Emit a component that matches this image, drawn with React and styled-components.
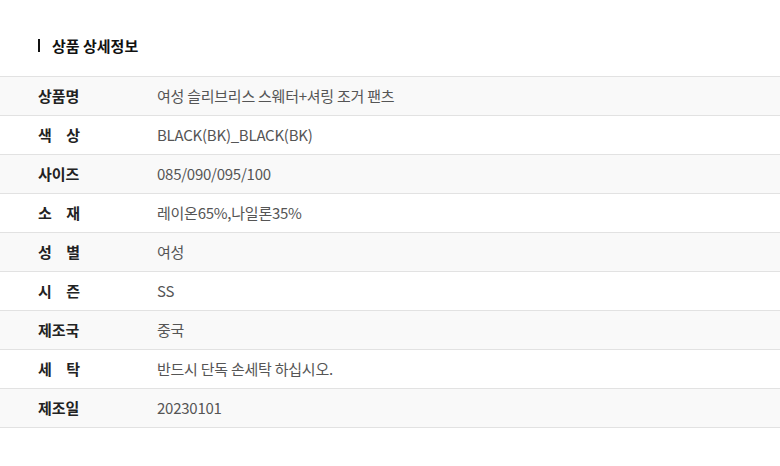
import React from 'react';
import styled, { createGlobalStyle } from 'styled-components';

const GlobalStyle = createGlobalStyle`
	body {
		margin: 0;
		background: #fff;
		font-family: 'Noto Sans CJK KR', 'Noto Sans', sans-serif;
	}
`;

const rows = [
	{ label: '상품명', value: '여성 슬리브리스 스웨터+셔링 조거 팬츠' },
	{ label: '색 상', value: 'BLACK(BK)_BLACK(BK)' },
	{ label: '사이즈', value: '085/090/095/100' },
	{ label: '소 재', value: '레이온65%,나일론35%' },
	{ label: '성 별', value: '여성' },
	{ label: '시 즌', value: 'SS' },
	{ label: '제조국', value: '중국' },
	{ label: '세 탁', value: '반드시 단독 손세탁 하십시오.' },
	{ label: '제조일', value: '20230101' }
];

const App = () => {
	return (
		<Wrap>
			<GlobalStyle />
			<Title>상품 상세정보</Title>
			<Table>
				{rows.map((row, i) => (
					<Row key={row.label} $shaded={i % 2 === 0}>
						<Label>{row.label}</Label>
						<Value>{row.value}</Value>
					</Row>
				))}
			</Table>
		</Wrap>
	);
};

export default App;

const Wrap = styled.div`
	width: 780px;
	height: 466px;
	padding-top: 33px;
	box-sizing: border-box;
`;

const Title = styled.h2`
	margin: 0 0 0 38px;
	display: flex;
	align-items: center;
	height: 26px;
	padding-bottom: 1px;
	box-sizing: border-box;
	font-size: 15px;
	font-weight: 700;
	color: #111;
	&::before {
		content: '';
		width: 2px;
		height: 13px;
		background: #111;
		margin-right: 12px;
	}
`;

const Table = styled.div`
	margin-top: 17px;
	border-top: 1px solid #e2e2e2;
`;

const Row = styled.div`
	display: flex;
	align-items: center;
	height: 38px;
	border-bottom: 1px solid #e2e2e2;
	background: ${p => (p.$shaded ? '#f9f9f9' : '#fff')};
`;

const Label = styled.div`
	width: 42px;
	margin: 0 77px 1px 38px;
	font-size: 15px;
	font-weight: 700;
	color: #222;
	text-align: justify;
	text-align-last: justify;
	white-space: nowrap;
`;

const Value = styled.div`
	margin-bottom: 1px;
	font-size: 15px;
	color: #555;
	letter-spacing: -0.25px;
`;
